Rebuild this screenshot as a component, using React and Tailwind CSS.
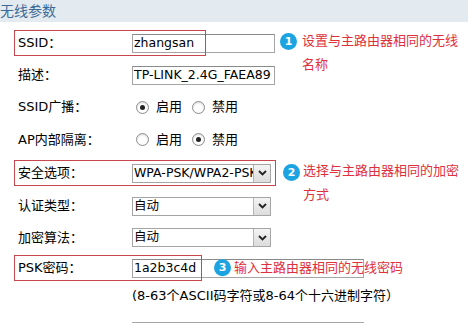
import React from "react";

const FONT = { fontFamily: '"DejaVu Sans", "Noto Sans CJK SC", sans-serif' };

function Badge({ n }) {
  return (
    <span className="flex h-[17px] w-[17px] shrink-0 items-center justify-center rounded-full bg-[#1ba3e2] text-[11px] font-bold leading-none text-white">
      {n}
    </span>
  );
}

function Radio({ checked }) {
  return (
    <span className="flex h-[13px] w-[13px] items-center justify-center rounded-full border border-[#8c8c8c] bg-white shadow-[inset_0_1px_2px_rgba(0,0,0,0.15)]">
      {checked && <span className="h-[5px] w-[5px] rounded-full bg-[#222]" />}
    </span>
  );
}

function TextInput({ value, width }) {
  return (
    <div
      className={`flex h-[19px] items-center overflow-hidden whitespace-nowrap border border-[#a5a5a5] border-t-[#8a8a8a] bg-white pl-[1px] text-[12.5px] text-black ${width}`}
    >
      {value}
    </div>
  );
}

function Select({ value }) {
  return (
    <div className="flex h-[19px] w-[139px] items-center border border-[#a5a5a5] bg-white">
      <div className="flex-1 overflow-hidden whitespace-nowrap pl-[1px] text-[12.5px] text-black">{value}</div>
      <div className="flex h-[17px] w-[17px] items-center justify-center border-l border-[#b5b5b5] bg-gradient-to-b from-[#f4f4f4] to-[#dcdcdc]">
        <svg width="9" height="6" viewBox="0 0 9 6">
          <path d="M1 1l3.5 3.5L8 1" fill="none" stroke="#222" strokeWidth="1.8" />
        </svg>
      </div>
    </div>
  );
}

function Row({ label, h, children, box, note }) {
  return (
    <div className={`relative flex items-center ${h}`}>
      {box && (
        <div
          className={`absolute left-[14px] top-1/2 h-[26px] -translate-y-1/2 border border-[#c8474c] ${box}`}
        />
      )}
      <div className="w-[132px] shrink-0 pl-[18px] text-[13px] text-black">{label}</div>
      {children}
      {note}
    </div>
  );
}

export default function App() {
  return (
    <div className="h-[323px] w-[468px] overflow-hidden bg-white" style={FONT}>
      <div className="flex h-[22px] items-center bg-[#e3eaf0] text-[14px] text-[#3a6a98]">无线参数</div>
      <div className="pt-[5px]">
        <Row
          label="SSID："
          h="h-[32px]"
          box="w-[192px]"
          note={
            <div className="absolute left-[280px] top-[6px] flex gap-[5px]">
              <Badge n="1" />
              <div className="whitespace-nowrap text-[13px] leading-[24px] text-[#e0303c] -mt-[4px]">
                设置与主路由器相同的无线
                <br />
                名称
              </div>
            </div>
          }
        >
          <TextInput value="zhangsan" width="w-[143px]" />
        </Row>
        <Row label="描述：" h="h-[32px]">
          <TextInput value="TP-LINK_2.4G_FAEA89" width="w-[143px]" />
        </Row>
        <Row label="SSID广播：" h="h-[32px]">
          <div className="flex items-center pl-[4px] text-[13px] text-black">
            <Radio checked />
            <span className="ml-[7px] mr-[10px]">启用</span>
            <Radio />
            <span className="ml-[7px]">禁用</span>
          </div>
        </Row>
        <Row label="AP内部隔离：" h="h-[33px]">
          <div className="flex items-center pl-[4px] text-[13px] text-black">
            <Radio />
            <span className="ml-[7px] mr-[10px]">启用</span>
            <Radio checked />
            <span className="ml-[7px]">禁用</span>
          </div>
        </Row>
        <Row
          label="安全选项："
          h="h-[34px]"
          box="w-[262px]"
          note={
            <div className="absolute left-[283px] top-[8px] flex gap-[3px]">
              <Badge n="2" />
              <div className="whitespace-nowrap text-[13px] leading-[24px] text-[#e0303c] -mt-[5px]">
                选择与主路由器相同的加密
                <br />
                方式
              </div>
            </div>
          }
        >
          <Select value="WPA-PSK/WPA2-PSK" />
        </Row>
        <Row label="认证类型：" h="h-[32px]">
          <Select value="自动" />
        </Row>
        <Row label="加密算法：" h="h-[31px]">
          <Select value="自动" />
        </Row>
        <Row
          label="PSK密码："
          h="h-[30px]"
          box="w-[188px]"
          note={
            <div className="absolute left-[214px] top-1/2 flex -translate-y-1/2 items-center gap-[3px]">
              <Badge n="3" />
              <span className="text-[13px] text-[#e0303c]">输入主路由器相同的无线密码</span>
            </div>
          }
        >
          <TextInput value="1a2b3c4d" width="w-[232px]" />
        </Row>
        <div className="flex h-[26px] items-center pl-[132px] text-[13px] text-black">
          (8-63个ASCII码字符或8-64个十六进制字符）
        </div>
        <div className="ml-[132px] mt-[13px] h-[19px] w-[232px] border border-[#a5a5a5] bg-white" />
      </div>
    </div>
  );
}
